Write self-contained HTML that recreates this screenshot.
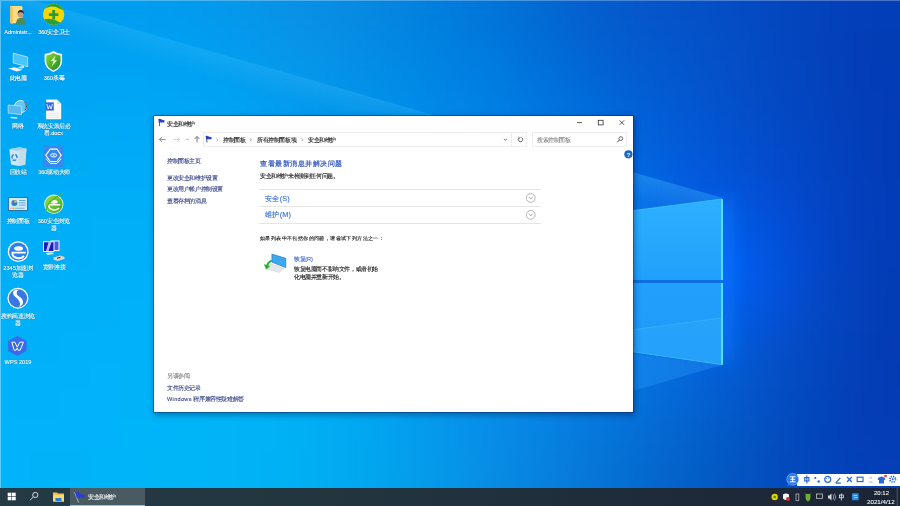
<!DOCTYPE html>
<html><head><meta charset="utf-8">
<style>
*{margin:0;padding:0;box-sizing:border-box}
html,body{width:900px;height:506px;overflow:hidden;font-family:"Liberation Sans",sans-serif;background:#0a70d8}
.a{position:absolute}
.t{position:absolute;white-space:nowrap;line-height:1}
.s{position:absolute;white-space:nowrap;line-height:1;transform:scale(.1);transform-origin:0 0}
.lb{color:#fff;text-align:center;text-shadow:0 0 10px rgba(0,0,0,.5)}
#desk{position:absolute;left:0;top:0;width:900px;height:488px;overflow:hidden}
.lbl{position:absolute;white-space:nowrap;line-height:7.2px;font-size:5.6px;color:#fff;text-align:center;text-shadow:0 0 1px rgba(0,0,0,.6)}
#win{position:absolute;left:153px;top:115px;width:481px;height:298px;background:#fff;background-clip:padding-box;border:1px solid rgba(0,40,100,.4);box-shadow:1px 2px 6px rgba(0,0,40,.35)}
#win .t{font-size:5.6px;color:#1a1a1a}
.nav{color:#2c3a8c !important}
.sep{position:absolute;height:1px;background:#e3e3e3}
#taskbar{position:absolute;left:0;top:488px;width:900px;height:18px;background:linear-gradient(90deg,#243a45 0%,#22353f 40%,#1e2a3a 75%,#1b2434 100%)}
</style></head><body>
<div id="desk">
<svg class="a" style="left:-60px;top:-60px;filter:blur(18px)" width="1020" height="608" viewBox="-60 -60 1020 608"><rect x="-60" y="-60" width="30" height="30" fill="#009def"/><rect x="-30" y="-60" width="30" height="30" fill="#009def"/><rect x="0" y="-60" width="30" height="30" fill="#009def"/><rect x="30" y="-60" width="30" height="30" fill="#009def"/><rect x="60" y="-60" width="30" height="30" fill="#009def"/><rect x="90" y="-60" width="30" height="30" fill="#009def"/><rect x="120" y="-60" width="30" height="30" fill="#009cef"/><rect x="150" y="-60" width="30" height="30" fill="#019bee"/><rect x="180" y="-60" width="30" height="30" fill="#0299ed"/><rect x="210" y="-60" width="30" height="30" fill="#0497eb"/><rect x="240" y="-60" width="30" height="30" fill="#0694e8"/><rect x="270" y="-60" width="30" height="30" fill="#0891e5"/><rect x="300" y="-60" width="30" height="30" fill="#088de3"/><rect x="330" y="-60" width="30" height="30" fill="#078ae1"/><rect x="360" y="-60" width="30" height="30" fill="#0586e0"/><rect x="390" y="-60" width="30" height="30" fill="#0482de"/><rect x="420" y="-60" width="30" height="30" fill="#027ddc"/><rect x="450" y="-60" width="30" height="30" fill="#0178da"/><rect x="480" y="-60" width="30" height="30" fill="#0173d7"/><rect x="510" y="-60" width="30" height="30" fill="#026cd4"/><rect x="540" y="-60" width="30" height="30" fill="#0366d0"/><rect x="570" y="-60" width="30" height="30" fill="#045fcd"/><rect x="600" y="-60" width="30" height="30" fill="#055acb"/><rect x="630" y="-60" width="30" height="30" fill="#0556c8"/><rect x="660" y="-60" width="30" height="30" fill="#0552c7"/><rect x="690" y="-60" width="30" height="30" fill="#044fc5"/><rect x="720" y="-60" width="30" height="30" fill="#044cc2"/><rect x="750" y="-60" width="30" height="30" fill="#0449c0"/><rect x="780" y="-60" width="30" height="30" fill="#0345bd"/><rect x="810" y="-60" width="30" height="30" fill="#0342bb"/><rect x="840" y="-60" width="30" height="30" fill="#0340b9"/><rect x="870" y="-60" width="30" height="30" fill="#033fb8"/><rect x="900" y="-60" width="30" height="30" fill="#033eb7"/><rect x="930" y="-60" width="30" height="30" fill="#033eb7"/><rect x="960" y="-60" width="30" height="30" fill="#033eb7"/><rect x="-60" y="-30" width="30" height="30" fill="#009def"/><rect x="-30" y="-30" width="30" height="30" fill="#009def"/><rect x="0" y="-30" width="30" height="30" fill="#009def"/><rect x="30" y="-30" width="30" height="30" fill="#009def"/><rect x="60" y="-30" width="30" height="30" fill="#009def"/><rect x="90" y="-30" width="30" height="30" fill="#009def"/><rect x="120" y="-30" width="30" height="30" fill="#009cef"/><rect x="150" y="-30" width="30" height="30" fill="#019bee"/><rect x="180" y="-30" width="30" height="30" fill="#0299ed"/><rect x="210" y="-30" width="30" height="30" fill="#0497eb"/><rect x="240" y="-30" width="30" height="30" fill="#0694e8"/><rect x="270" y="-30" width="30" height="30" fill="#0891e5"/><rect x="300" y="-30" width="30" height="30" fill="#088de3"/><rect x="330" y="-30" width="30" height="30" fill="#078ae1"/><rect x="360" y="-30" width="30" height="30" fill="#0586e0"/><rect x="390" y="-30" width="30" height="30" fill="#0482de"/><rect x="420" y="-30" width="30" height="30" fill="#027ddc"/><rect x="450" y="-30" width="30" height="30" fill="#0178da"/><rect x="480" y="-30" width="30" height="30" fill="#0173d7"/><rect x="510" y="-30" width="30" height="30" fill="#026cd4"/><rect x="540" y="-30" width="30" height="30" fill="#0366d0"/><rect x="570" y="-30" width="30" height="30" fill="#045fcd"/><rect x="600" y="-30" width="30" height="30" fill="#055acb"/><rect x="630" y="-30" width="30" height="30" fill="#0556c8"/><rect x="660" y="-30" width="30" height="30" fill="#0552c7"/><rect x="690" y="-30" width="30" height="30" fill="#044fc5"/><rect x="720" y="-30" width="30" height="30" fill="#044cc2"/><rect x="750" y="-30" width="30" height="30" fill="#0449c0"/><rect x="780" y="-30" width="30" height="30" fill="#0345bd"/><rect x="810" y="-30" width="30" height="30" fill="#0342bb"/><rect x="840" y="-30" width="30" height="30" fill="#0340b9"/><rect x="870" y="-30" width="30" height="30" fill="#033fb8"/><rect x="900" y="-30" width="30" height="30" fill="#033eb7"/><rect x="930" y="-30" width="30" height="30" fill="#033eb7"/><rect x="960" y="-30" width="30" height="30" fill="#033eb7"/><rect x="-60" y="0" width="30" height="30" fill="#009ef0"/><rect x="-30" y="0" width="30" height="30" fill="#009ef0"/><rect x="0" y="0" width="30" height="30" fill="#009ef0"/><rect x="30" y="0" width="30" height="30" fill="#009ef0"/><rect x="60" y="0" width="30" height="30" fill="#009ef0"/><rect x="90" y="0" width="30" height="30" fill="#009ef0"/><rect x="120" y="0" width="30" height="30" fill="#009ef0"/><rect x="150" y="0" width="30" height="30" fill="#009def"/><rect x="180" y="0" width="30" height="30" fill="#029bee"/><rect x="210" y="0" width="30" height="30" fill="#0499ec"/><rect x="240" y="0" width="30" height="30" fill="#0696ea"/><rect x="270" y="0" width="30" height="30" fill="#0893e7"/><rect x="300" y="0" width="30" height="30" fill="#088fe4"/><rect x="330" y="0" width="30" height="30" fill="#078be3"/><rect x="360" y="0" width="30" height="30" fill="#0588e1"/><rect x="390" y="0" width="30" height="30" fill="#0384e0"/><rect x="420" y="0" width="30" height="30" fill="#017fde"/><rect x="450" y="0" width="30" height="30" fill="#017adc"/><rect x="480" y="0" width="30" height="30" fill="#0174d9"/><rect x="510" y="0" width="30" height="30" fill="#016ed5"/><rect x="540" y="0" width="30" height="30" fill="#0367d2"/><rect x="570" y="0" width="30" height="30" fill="#0460ce"/><rect x="600" y="0" width="30" height="30" fill="#045bcc"/><rect x="630" y="0" width="30" height="30" fill="#0557ca"/><rect x="660" y="0" width="30" height="30" fill="#0553c8"/><rect x="690" y="0" width="30" height="30" fill="#0450c6"/><rect x="720" y="0" width="30" height="30" fill="#044cc3"/><rect x="750" y="0" width="30" height="30" fill="#0449c1"/><rect x="780" y="0" width="30" height="30" fill="#0345bd"/><rect x="810" y="0" width="30" height="30" fill="#0342ba"/><rect x="840" y="0" width="30" height="30" fill="#033fb8"/><rect x="870" y="0" width="30" height="30" fill="#023eb7"/><rect x="900" y="0" width="30" height="30" fill="#023db7"/><rect x="930" y="0" width="30" height="30" fill="#023db7"/><rect x="960" y="0" width="30" height="30" fill="#023db7"/><rect x="-60" y="30" width="30" height="30" fill="#00a0f1"/><rect x="-30" y="30" width="30" height="30" fill="#00a0f1"/><rect x="0" y="30" width="30" height="30" fill="#00a1f1"/><rect x="30" y="30" width="30" height="30" fill="#00a1f2"/><rect x="60" y="30" width="30" height="30" fill="#00a1f2"/><rect x="90" y="30" width="30" height="30" fill="#00a1f2"/><rect x="120" y="30" width="30" height="30" fill="#00a1f2"/><rect x="150" y="30" width="30" height="30" fill="#00a0f2"/><rect x="180" y="30" width="30" height="30" fill="#009ff1"/><rect x="210" y="30" width="30" height="30" fill="#029cef"/><rect x="240" y="30" width="30" height="30" fill="#0599ec"/><rect x="270" y="30" width="30" height="30" fill="#0796e9"/><rect x="300" y="30" width="30" height="30" fill="#0792e7"/><rect x="330" y="30" width="30" height="30" fill="#068fe5"/><rect x="360" y="30" width="30" height="30" fill="#048be4"/><rect x="390" y="30" width="30" height="30" fill="#0187e3"/><rect x="420" y="30" width="30" height="30" fill="#0082e1"/><rect x="450" y="30" width="30" height="30" fill="#007ddf"/><rect x="480" y="30" width="30" height="30" fill="#0078dc"/><rect x="510" y="30" width="30" height="30" fill="#0071d9"/><rect x="540" y="30" width="30" height="30" fill="#016bd5"/><rect x="570" y="30" width="30" height="30" fill="#0363d2"/><rect x="600" y="30" width="30" height="30" fill="#045dcf"/><rect x="630" y="30" width="30" height="30" fill="#0459cd"/><rect x="660" y="30" width="30" height="30" fill="#0455cb"/><rect x="690" y="30" width="30" height="30" fill="#0451c8"/><rect x="720" y="30" width="30" height="30" fill="#044ec5"/><rect x="750" y="30" width="30" height="30" fill="#034ac2"/><rect x="780" y="30" width="30" height="30" fill="#0345be"/><rect x="810" y="30" width="30" height="30" fill="#0341ba"/><rect x="840" y="30" width="30" height="30" fill="#033eb7"/><rect x="870" y="30" width="30" height="30" fill="#023db6"/><rect x="900" y="30" width="30" height="30" fill="#023cb5"/><rect x="930" y="30" width="30" height="30" fill="#023cb5"/><rect x="960" y="30" width="30" height="30" fill="#023cb5"/><rect x="-60" y="60" width="30" height="30" fill="#00a3f3"/><rect x="-30" y="60" width="30" height="30" fill="#00a3f3"/><rect x="0" y="60" width="30" height="30" fill="#00a3f3"/><rect x="30" y="60" width="30" height="30" fill="#00a3f3"/><rect x="60" y="60" width="30" height="30" fill="#00a4f3"/><rect x="90" y="60" width="30" height="30" fill="#00a4f4"/><rect x="120" y="60" width="30" height="30" fill="#00a4f4"/><rect x="150" y="60" width="30" height="30" fill="#00a3f4"/><rect x="180" y="60" width="30" height="30" fill="#00a2f4"/><rect x="210" y="60" width="30" height="30" fill="#01a0f2"/><rect x="240" y="60" width="30" height="30" fill="#039def"/><rect x="270" y="60" width="30" height="30" fill="#0599ec"/><rect x="300" y="60" width="30" height="30" fill="#0596ea"/><rect x="330" y="60" width="30" height="30" fill="#0492e8"/><rect x="360" y="60" width="30" height="30" fill="#028ee7"/><rect x="390" y="60" width="30" height="30" fill="#008ae6"/><rect x="420" y="60" width="30" height="30" fill="#0085e4"/><rect x="450" y="60" width="30" height="30" fill="#0081e2"/><rect x="480" y="60" width="30" height="30" fill="#007bdf"/><rect x="510" y="60" width="30" height="30" fill="#0075dd"/><rect x="540" y="60" width="30" height="30" fill="#006fd9"/><rect x="570" y="60" width="30" height="30" fill="#0168d6"/><rect x="600" y="60" width="30" height="30" fill="#0261d3"/><rect x="630" y="60" width="30" height="30" fill="#035cd1"/><rect x="660" y="60" width="30" height="30" fill="#0357ce"/><rect x="690" y="60" width="30" height="30" fill="#0453cb"/><rect x="720" y="60" width="30" height="30" fill="#044ec7"/><rect x="750" y="60" width="30" height="30" fill="#034ac3"/><rect x="780" y="60" width="30" height="30" fill="#0346bf"/><rect x="810" y="60" width="30" height="30" fill="#0342bb"/><rect x="840" y="60" width="30" height="30" fill="#033eb8"/><rect x="870" y="60" width="30" height="30" fill="#023cb6"/><rect x="900" y="60" width="30" height="30" fill="#023bb5"/><rect x="930" y="60" width="30" height="30" fill="#023bb5"/><rect x="960" y="60" width="30" height="30" fill="#023bb5"/><rect x="-60" y="90" width="30" height="30" fill="#00a5f4"/><rect x="-30" y="90" width="30" height="30" fill="#00a5f4"/><rect x="0" y="90" width="30" height="30" fill="#00a6f4"/><rect x="30" y="90" width="30" height="30" fill="#00a6f4"/><rect x="60" y="90" width="30" height="30" fill="#00a6f5"/><rect x="90" y="90" width="30" height="30" fill="#00a7f5"/><rect x="120" y="90" width="30" height="30" fill="#00a7f6"/><rect x="150" y="90" width="30" height="30" fill="#00a6f6"/><rect x="180" y="90" width="30" height="30" fill="#00a5f5"/><rect x="210" y="90" width="30" height="30" fill="#00a3f4"/><rect x="240" y="90" width="30" height="30" fill="#02a0f2"/><rect x="270" y="90" width="30" height="30" fill="#039cef"/><rect x="300" y="90" width="30" height="30" fill="#0399ed"/><rect x="330" y="90" width="30" height="30" fill="#0295eb"/><rect x="360" y="90" width="30" height="30" fill="#0191ea"/><rect x="390" y="90" width="30" height="30" fill="#008de8"/><rect x="420" y="90" width="30" height="30" fill="#0088e7"/><rect x="450" y="90" width="30" height="30" fill="#0084e5"/><rect x="480" y="90" width="30" height="30" fill="#007ee3"/><rect x="510" y="90" width="30" height="30" fill="#0079e1"/><rect x="540" y="90" width="30" height="30" fill="#0073de"/><rect x="570" y="90" width="30" height="30" fill="#006cdb"/><rect x="600" y="90" width="30" height="30" fill="#0165d8"/><rect x="630" y="90" width="30" height="30" fill="#025fd5"/><rect x="660" y="90" width="30" height="30" fill="#035ad2"/><rect x="690" y="90" width="30" height="30" fill="#0354cf"/><rect x="720" y="90" width="30" height="30" fill="#0350ca"/><rect x="750" y="90" width="30" height="30" fill="#034bc5"/><rect x="780" y="90" width="30" height="30" fill="#0346c1"/><rect x="810" y="90" width="30" height="30" fill="#0342bd"/><rect x="840" y="90" width="30" height="30" fill="#033fb9"/><rect x="870" y="90" width="30" height="30" fill="#033cb6"/><rect x="900" y="90" width="30" height="30" fill="#033bb5"/><rect x="930" y="90" width="30" height="30" fill="#033bb5"/><rect x="960" y="90" width="30" height="30" fill="#033bb5"/><rect x="-60" y="120" width="30" height="30" fill="#00a7f5"/><rect x="-30" y="120" width="30" height="30" fill="#00a7f5"/><rect x="0" y="120" width="30" height="30" fill="#00a8f5"/><rect x="30" y="120" width="30" height="30" fill="#00a8f5"/><rect x="60" y="120" width="30" height="30" fill="#00a9f6"/><rect x="90" y="120" width="30" height="30" fill="#00a9f6"/><rect x="120" y="120" width="30" height="30" fill="#00a9f7"/><rect x="150" y="120" width="30" height="30" fill="#00a9f7"/><rect x="180" y="120" width="30" height="30" fill="#00a7f6"/><rect x="210" y="120" width="30" height="30" fill="#00a5f5"/><rect x="240" y="120" width="30" height="30" fill="#01a3f3"/><rect x="270" y="120" width="30" height="30" fill="#029ff2"/><rect x="300" y="120" width="30" height="30" fill="#029cf0"/><rect x="330" y="120" width="30" height="30" fill="#0198ee"/><rect x="360" y="120" width="30" height="30" fill="#0094ed"/><rect x="390" y="120" width="30" height="30" fill="#0090eb"/><rect x="420" y="120" width="30" height="30" fill="#008bea"/><rect x="450" y="120" width="30" height="30" fill="#0086e8"/><rect x="480" y="120" width="30" height="30" fill="#0081e6"/><rect x="510" y="120" width="30" height="30" fill="#007ce4"/><rect x="540" y="120" width="30" height="30" fill="#0076e2"/><rect x="570" y="120" width="30" height="30" fill="#006fe0"/><rect x="600" y="120" width="30" height="30" fill="#0169dd"/><rect x="630" y="120" width="30" height="30" fill="#0262da"/><rect x="660" y="120" width="30" height="30" fill="#035cd7"/><rect x="690" y="120" width="30" height="30" fill="#0356d3"/><rect x="720" y="120" width="30" height="30" fill="#0351ce"/><rect x="750" y="120" width="30" height="30" fill="#034cc9"/><rect x="780" y="120" width="30" height="30" fill="#0347c4"/><rect x="810" y="120" width="30" height="30" fill="#0343bf"/><rect x="840" y="120" width="30" height="30" fill="#033fba"/><rect x="870" y="120" width="30" height="30" fill="#033cb7"/><rect x="900" y="120" width="30" height="30" fill="#033ab5"/><rect x="930" y="120" width="30" height="30" fill="#033ab5"/><rect x="960" y="120" width="30" height="30" fill="#033ab5"/><rect x="-60" y="150" width="30" height="30" fill="#00a9f6"/><rect x="-30" y="150" width="30" height="30" fill="#00a9f6"/><rect x="0" y="150" width="30" height="30" fill="#00aaf6"/><rect x="30" y="150" width="30" height="30" fill="#00aaf6"/><rect x="60" y="150" width="30" height="30" fill="#00abf6"/><rect x="90" y="150" width="30" height="30" fill="#00abf7"/><rect x="120" y="150" width="30" height="30" fill="#00abf7"/><rect x="150" y="150" width="30" height="30" fill="#00abf7"/><rect x="180" y="150" width="30" height="30" fill="#00aaf7"/><rect x="210" y="150" width="30" height="30" fill="#00a8f6"/><rect x="240" y="150" width="30" height="30" fill="#00a5f5"/><rect x="270" y="150" width="30" height="30" fill="#01a2f3"/><rect x="300" y="150" width="30" height="30" fill="#019ff2"/><rect x="330" y="150" width="30" height="30" fill="#009bf0"/><rect x="360" y="150" width="30" height="30" fill="#0097ef"/><rect x="390" y="150" width="30" height="30" fill="#0092ee"/><rect x="420" y="150" width="30" height="30" fill="#008eec"/><rect x="450" y="150" width="30" height="30" fill="#0089eb"/><rect x="480" y="150" width="30" height="30" fill="#0084e9"/><rect x="510" y="150" width="30" height="30" fill="#007fe8"/><rect x="540" y="150" width="30" height="30" fill="#0079e6"/><rect x="570" y="150" width="30" height="30" fill="#0072e4"/><rect x="600" y="150" width="30" height="30" fill="#016be2"/><rect x="630" y="150" width="30" height="30" fill="#0265df"/><rect x="660" y="150" width="30" height="30" fill="#025edc"/><rect x="690" y="150" width="30" height="30" fill="#0358d8"/><rect x="720" y="150" width="30" height="30" fill="#0352d3"/><rect x="750" y="150" width="30" height="30" fill="#034dce"/><rect x="780" y="150" width="30" height="30" fill="#0348c7"/><rect x="810" y="150" width="30" height="30" fill="#0343c1"/><rect x="840" y="150" width="30" height="30" fill="#033fbc"/><rect x="870" y="150" width="30" height="30" fill="#033cb7"/><rect x="900" y="150" width="30" height="30" fill="#033ab5"/><rect x="930" y="150" width="30" height="30" fill="#033ab5"/><rect x="960" y="150" width="30" height="30" fill="#033ab5"/><rect x="-60" y="180" width="30" height="30" fill="#00abf6"/><rect x="-30" y="180" width="30" height="30" fill="#00abf6"/><rect x="0" y="180" width="30" height="30" fill="#00abf7"/><rect x="30" y="180" width="30" height="30" fill="#00acf7"/><rect x="60" y="180" width="30" height="30" fill="#00adf7"/><rect x="90" y="180" width="30" height="30" fill="#00adf7"/><rect x="120" y="180" width="30" height="30" fill="#00adf7"/><rect x="150" y="180" width="30" height="30" fill="#00adf8"/><rect x="180" y="180" width="30" height="30" fill="#00abf7"/><rect x="210" y="180" width="30" height="30" fill="#00aaf7"/><rect x="240" y="180" width="30" height="30" fill="#00a7f6"/><rect x="270" y="180" width="30" height="30" fill="#00a5f5"/><rect x="300" y="180" width="30" height="30" fill="#00a1f3"/><rect x="330" y="180" width="30" height="30" fill="#009df2"/><rect x="360" y="180" width="30" height="30" fill="#0099f1"/><rect x="390" y="180" width="30" height="30" fill="#0095f0"/><rect x="420" y="180" width="30" height="30" fill="#0090ee"/><rect x="450" y="180" width="30" height="30" fill="#008ced"/><rect x="480" y="180" width="30" height="30" fill="#0086ec"/><rect x="510" y="180" width="30" height="30" fill="#0081ea"/><rect x="540" y="180" width="30" height="30" fill="#007be9"/><rect x="570" y="180" width="30" height="30" fill="#0175e7"/><rect x="600" y="180" width="30" height="30" fill="#016ee6"/><rect x="630" y="180" width="30" height="30" fill="#0267e4"/><rect x="660" y="180" width="30" height="30" fill="#0360e1"/><rect x="690" y="180" width="30" height="30" fill="#035ade"/><rect x="720" y="180" width="30" height="30" fill="#0354d9"/><rect x="750" y="180" width="30" height="30" fill="#034ed2"/><rect x="780" y="180" width="30" height="30" fill="#0349cb"/><rect x="810" y="180" width="30" height="30" fill="#0344c4"/><rect x="840" y="180" width="30" height="30" fill="#0340bd"/><rect x="870" y="180" width="30" height="30" fill="#033cb8"/><rect x="900" y="180" width="30" height="30" fill="#033bb5"/><rect x="930" y="180" width="30" height="30" fill="#033bb5"/><rect x="960" y="180" width="30" height="30" fill="#033bb5"/><rect x="-60" y="210" width="30" height="30" fill="#00acf7"/><rect x="-30" y="210" width="30" height="30" fill="#00acf7"/><rect x="0" y="210" width="30" height="30" fill="#00adf7"/><rect x="30" y="210" width="30" height="30" fill="#00adf7"/><rect x="60" y="210" width="30" height="30" fill="#00aef8"/><rect x="90" y="210" width="30" height="30" fill="#00aff8"/><rect x="120" y="210" width="30" height="30" fill="#00aff8"/><rect x="150" y="210" width="30" height="30" fill="#00aef8"/><rect x="180" y="210" width="30" height="30" fill="#00adf8"/><rect x="210" y="210" width="30" height="30" fill="#00acf7"/><rect x="240" y="210" width="30" height="30" fill="#00a9f7"/><rect x="270" y="210" width="30" height="30" fill="#00a7f6"/><rect x="300" y="210" width="30" height="30" fill="#00a4f5"/><rect x="330" y="210" width="30" height="30" fill="#00a0f3"/><rect x="360" y="210" width="30" height="30" fill="#009cf2"/><rect x="390" y="210" width="30" height="30" fill="#0097f1"/><rect x="420" y="210" width="30" height="30" fill="#0093f0"/><rect x="450" y="210" width="30" height="30" fill="#008eef"/><rect x="480" y="210" width="30" height="30" fill="#0089ee"/><rect x="510" y="210" width="30" height="30" fill="#0083ec"/><rect x="540" y="210" width="30" height="30" fill="#017deb"/><rect x="570" y="210" width="30" height="30" fill="#0177ea"/><rect x="600" y="210" width="30" height="30" fill="#0270e9"/><rect x="630" y="210" width="30" height="30" fill="#0269e7"/><rect x="660" y="210" width="30" height="30" fill="#0362e5"/><rect x="690" y="210" width="30" height="30" fill="#035be2"/><rect x="720" y="210" width="30" height="30" fill="#0355de"/><rect x="750" y="210" width="30" height="30" fill="#034fd7"/><rect x="780" y="210" width="30" height="30" fill="#0349ce"/><rect x="810" y="210" width="30" height="30" fill="#0345c5"/><rect x="840" y="210" width="30" height="30" fill="#0340be"/><rect x="870" y="210" width="30" height="30" fill="#033cb8"/><rect x="900" y="210" width="30" height="30" fill="#033bb5"/><rect x="930" y="210" width="30" height="30" fill="#033bb5"/><rect x="960" y="210" width="30" height="30" fill="#033bb5"/><rect x="-60" y="240" width="30" height="30" fill="#00aef8"/><rect x="-30" y="240" width="30" height="30" fill="#00aef8"/><rect x="0" y="240" width="30" height="30" fill="#00aef8"/><rect x="30" y="240" width="30" height="30" fill="#00aef8"/><rect x="60" y="240" width="30" height="30" fill="#00aff8"/><rect x="90" y="240" width="30" height="30" fill="#00b0f8"/><rect x="120" y="240" width="30" height="30" fill="#00b0f8"/><rect x="150" y="240" width="30" height="30" fill="#00b0f8"/><rect x="180" y="240" width="30" height="30" fill="#00aff8"/><rect x="210" y="240" width="30" height="30" fill="#00adf8"/><rect x="240" y="240" width="30" height="30" fill="#00abf7"/><rect x="270" y="240" width="30" height="30" fill="#00a9f6"/><rect x="300" y="240" width="30" height="30" fill="#00a6f5"/><rect x="330" y="240" width="30" height="30" fill="#00a2f4"/><rect x="360" y="240" width="30" height="30" fill="#009ef3"/><rect x="390" y="240" width="30" height="30" fill="#009af2"/><rect x="420" y="240" width="30" height="30" fill="#0095f1"/><rect x="450" y="240" width="30" height="30" fill="#0190f0"/><rect x="480" y="240" width="30" height="30" fill="#018aef"/><rect x="510" y="240" width="30" height="30" fill="#0185ee"/><rect x="540" y="240" width="30" height="30" fill="#027fed"/><rect x="570" y="240" width="30" height="30" fill="#0279ec"/><rect x="600" y="240" width="30" height="30" fill="#0372eb"/><rect x="630" y="240" width="30" height="30" fill="#036be9"/><rect x="660" y="240" width="30" height="30" fill="#0364e8"/><rect x="690" y="240" width="30" height="30" fill="#035de5"/><rect x="720" y="240" width="30" height="30" fill="#0356e1"/><rect x="750" y="240" width="30" height="30" fill="#0350d9"/><rect x="780" y="240" width="30" height="30" fill="#034acf"/><rect x="810" y="240" width="30" height="30" fill="#0345c5"/><rect x="840" y="240" width="30" height="30" fill="#0341bd"/><rect x="870" y="240" width="30" height="30" fill="#033db7"/><rect x="900" y="240" width="30" height="30" fill="#033bb5"/><rect x="930" y="240" width="30" height="30" fill="#033bb5"/><rect x="960" y="240" width="30" height="30" fill="#033bb5"/><rect x="-60" y="270" width="30" height="30" fill="#00aff8"/><rect x="-30" y="270" width="30" height="30" fill="#00aff8"/><rect x="0" y="270" width="30" height="30" fill="#00aff8"/><rect x="30" y="270" width="30" height="30" fill="#00b0f8"/><rect x="60" y="270" width="30" height="30" fill="#00b0f9"/><rect x="90" y="270" width="30" height="30" fill="#00b1f9"/><rect x="120" y="270" width="30" height="30" fill="#00b1f9"/><rect x="150" y="270" width="30" height="30" fill="#00b1f9"/><rect x="180" y="270" width="30" height="30" fill="#00b0f9"/><rect x="210" y="270" width="30" height="30" fill="#00aff8"/><rect x="240" y="270" width="30" height="30" fill="#00adf8"/><rect x="270" y="270" width="30" height="30" fill="#00abf7"/><rect x="300" y="270" width="30" height="30" fill="#00a8f6"/><rect x="330" y="270" width="30" height="30" fill="#00a4f5"/><rect x="360" y="270" width="30" height="30" fill="#01a0f4"/><rect x="390" y="270" width="30" height="30" fill="#019bf3"/><rect x="420" y="270" width="30" height="30" fill="#0196f1"/><rect x="450" y="270" width="30" height="30" fill="#0291f0"/><rect x="480" y="270" width="30" height="30" fill="#028cef"/><rect x="510" y="270" width="30" height="30" fill="#0286ee"/><rect x="540" y="270" width="30" height="30" fill="#0380ed"/><rect x="570" y="270" width="30" height="30" fill="#037aec"/><rect x="600" y="270" width="30" height="30" fill="#0374eb"/><rect x="630" y="270" width="30" height="30" fill="#046de9"/><rect x="660" y="270" width="30" height="30" fill="#0466e8"/><rect x="690" y="270" width="30" height="30" fill="#045fe5"/><rect x="720" y="270" width="30" height="30" fill="#0457e1"/><rect x="750" y="270" width="30" height="30" fill="#0451d9"/><rect x="780" y="270" width="30" height="30" fill="#044bce"/><rect x="810" y="270" width="30" height="30" fill="#0445c4"/><rect x="840" y="270" width="30" height="30" fill="#0441bc"/><rect x="870" y="270" width="30" height="30" fill="#033db6"/><rect x="900" y="270" width="30" height="30" fill="#033bb4"/><rect x="930" y="270" width="30" height="30" fill="#033bb4"/><rect x="960" y="270" width="30" height="30" fill="#033bb4"/><rect x="-60" y="300" width="30" height="30" fill="#00b0f9"/><rect x="-30" y="300" width="30" height="30" fill="#00b0f9"/><rect x="0" y="300" width="30" height="30" fill="#00b0f9"/><rect x="30" y="300" width="30" height="30" fill="#00b0f9"/><rect x="60" y="300" width="30" height="30" fill="#00b1f9"/><rect x="90" y="300" width="30" height="30" fill="#00b1f9"/><rect x="120" y="300" width="30" height="30" fill="#00b2f9"/><rect x="150" y="300" width="30" height="30" fill="#00b2f9"/><rect x="180" y="300" width="30" height="30" fill="#00b1f9"/><rect x="210" y="300" width="30" height="30" fill="#00b0f8"/><rect x="240" y="300" width="30" height="30" fill="#00aff8"/><rect x="270" y="300" width="30" height="30" fill="#00acf7"/><rect x="300" y="300" width="30" height="30" fill="#00a9f6"/><rect x="330" y="300" width="30" height="30" fill="#00a6f5"/><rect x="360" y="300" width="30" height="30" fill="#01a1f4"/><rect x="390" y="300" width="30" height="30" fill="#029df3"/><rect x="420" y="300" width="30" height="30" fill="#0298f1"/><rect x="450" y="300" width="30" height="30" fill="#0392f0"/><rect x="480" y="300" width="30" height="30" fill="#038def"/><rect x="510" y="300" width="30" height="30" fill="#0487ed"/><rect x="540" y="300" width="30" height="30" fill="#0481ec"/><rect x="570" y="300" width="30" height="30" fill="#047bea"/><rect x="600" y="300" width="30" height="30" fill="#0475e9"/><rect x="630" y="300" width="30" height="30" fill="#046fe7"/><rect x="660" y="300" width="30" height="30" fill="#0468e5"/><rect x="690" y="300" width="30" height="30" fill="#0461e1"/><rect x="720" y="300" width="30" height="30" fill="#0459dc"/><rect x="750" y="300" width="30" height="30" fill="#0452d4"/><rect x="780" y="300" width="30" height="30" fill="#044bca"/><rect x="810" y="300" width="30" height="30" fill="#0446c1"/><rect x="840" y="300" width="30" height="30" fill="#0441ba"/><rect x="870" y="300" width="30" height="30" fill="#033db5"/><rect x="900" y="300" width="30" height="30" fill="#033bb3"/><rect x="930" y="300" width="30" height="30" fill="#033bb3"/><rect x="960" y="300" width="30" height="30" fill="#033bb3"/><rect x="-60" y="330" width="30" height="30" fill="#00b1f9"/><rect x="-30" y="330" width="30" height="30" fill="#00b1f9"/><rect x="0" y="330" width="30" height="30" fill="#00b1f9"/><rect x="30" y="330" width="30" height="30" fill="#00b1f9"/><rect x="60" y="330" width="30" height="30" fill="#00b2f9"/><rect x="90" y="330" width="30" height="30" fill="#00b2f9"/><rect x="120" y="330" width="30" height="30" fill="#00b2f9"/><rect x="150" y="330" width="30" height="30" fill="#00b3f9"/><rect x="180" y="330" width="30" height="30" fill="#00b2f9"/><rect x="210" y="330" width="30" height="30" fill="#00b1f8"/><rect x="240" y="330" width="30" height="30" fill="#00b0f8"/><rect x="270" y="330" width="30" height="30" fill="#00aef7"/><rect x="300" y="330" width="30" height="30" fill="#00abf6"/><rect x="330" y="330" width="30" height="30" fill="#01a7f5"/><rect x="360" y="330" width="30" height="30" fill="#01a3f3"/><rect x="390" y="330" width="30" height="30" fill="#029ef2"/><rect x="420" y="330" width="30" height="30" fill="#0399f1"/><rect x="450" y="330" width="30" height="30" fill="#0493ef"/><rect x="480" y="330" width="30" height="30" fill="#048ded"/><rect x="510" y="330" width="30" height="30" fill="#0588ec"/><rect x="540" y="330" width="30" height="30" fill="#0582ea"/><rect x="570" y="330" width="30" height="30" fill="#057ce8"/><rect x="600" y="330" width="30" height="30" fill="#0576e6"/><rect x="630" y="330" width="30" height="30" fill="#0570e3"/><rect x="660" y="330" width="30" height="30" fill="#046ae0"/><rect x="690" y="330" width="30" height="30" fill="#0462dc"/><rect x="720" y="330" width="30" height="30" fill="#045ad6"/><rect x="750" y="330" width="30" height="30" fill="#0452ce"/><rect x="780" y="330" width="30" height="30" fill="#044cc5"/><rect x="810" y="330" width="30" height="30" fill="#0345be"/><rect x="840" y="330" width="30" height="30" fill="#0340b9"/><rect x="870" y="330" width="30" height="30" fill="#033cb5"/><rect x="900" y="330" width="30" height="30" fill="#033bb3"/><rect x="930" y="330" width="30" height="30" fill="#033bb3"/><rect x="960" y="330" width="30" height="30" fill="#033bb3"/><rect x="-60" y="360" width="30" height="30" fill="#00b1f9"/><rect x="-30" y="360" width="30" height="30" fill="#00b1f9"/><rect x="0" y="360" width="30" height="30" fill="#00b2f9"/><rect x="30" y="360" width="30" height="30" fill="#00b2f9"/><rect x="60" y="360" width="30" height="30" fill="#00b2fa"/><rect x="90" y="360" width="30" height="30" fill="#00b3fa"/><rect x="120" y="360" width="30" height="30" fill="#00b3f9"/><rect x="150" y="360" width="30" height="30" fill="#00b3f9"/><rect x="180" y="360" width="30" height="30" fill="#00b3f9"/><rect x="210" y="360" width="30" height="30" fill="#00b2f8"/><rect x="240" y="360" width="30" height="30" fill="#00b1f8"/><rect x="270" y="360" width="30" height="30" fill="#00aff7"/><rect x="300" y="360" width="30" height="30" fill="#00acf6"/><rect x="330" y="360" width="30" height="30" fill="#01a8f4"/><rect x="360" y="360" width="30" height="30" fill="#02a4f3"/><rect x="390" y="360" width="30" height="30" fill="#039ff1"/><rect x="420" y="360" width="30" height="30" fill="#0499ef"/><rect x="450" y="360" width="30" height="30" fill="#0593ee"/><rect x="480" y="360" width="30" height="30" fill="#068eec"/><rect x="510" y="360" width="30" height="30" fill="#0688e9"/><rect x="540" y="360" width="30" height="30" fill="#0682e7"/><rect x="570" y="360" width="30" height="30" fill="#067ce4"/><rect x="600" y="360" width="30" height="30" fill="#0576e2"/><rect x="630" y="360" width="30" height="30" fill="#0570df"/><rect x="660" y="360" width="30" height="30" fill="#056adb"/><rect x="690" y="360" width="30" height="30" fill="#0462d6"/><rect x="720" y="360" width="30" height="30" fill="#045ad0"/><rect x="750" y="360" width="30" height="30" fill="#0452c8"/><rect x="780" y="360" width="30" height="30" fill="#034bc1"/><rect x="810" y="360" width="30" height="30" fill="#0345bc"/><rect x="840" y="360" width="30" height="30" fill="#0440b8"/><rect x="870" y="360" width="30" height="30" fill="#043cb4"/><rect x="900" y="360" width="30" height="30" fill="#043ab3"/><rect x="930" y="360" width="30" height="30" fill="#043ab3"/><rect x="960" y="360" width="30" height="30" fill="#043ab3"/><rect x="-60" y="390" width="30" height="30" fill="#00b2fa"/><rect x="-30" y="390" width="30" height="30" fill="#00b2fa"/><rect x="0" y="390" width="30" height="30" fill="#00b2fa"/><rect x="30" y="390" width="30" height="30" fill="#00b2fa"/><rect x="60" y="390" width="30" height="30" fill="#00b3fa"/><rect x="90" y="390" width="30" height="30" fill="#00b3fa"/><rect x="120" y="390" width="30" height="30" fill="#00b3f9"/><rect x="150" y="390" width="30" height="30" fill="#00b4f9"/><rect x="180" y="390" width="30" height="30" fill="#00b4f9"/><rect x="210" y="390" width="30" height="30" fill="#00b3f8"/><rect x="240" y="390" width="30" height="30" fill="#00b2f7"/><rect x="270" y="390" width="30" height="30" fill="#00b0f6"/><rect x="300" y="390" width="30" height="30" fill="#00adf5"/><rect x="330" y="390" width="30" height="30" fill="#01a9f3"/><rect x="360" y="390" width="30" height="30" fill="#02a5f2"/><rect x="390" y="390" width="30" height="30" fill="#039ff0"/><rect x="420" y="390" width="30" height="30" fill="#059aee"/><rect x="450" y="390" width="30" height="30" fill="#0693ec"/><rect x="480" y="390" width="30" height="30" fill="#078de9"/><rect x="510" y="390" width="30" height="30" fill="#0787e7"/><rect x="540" y="390" width="30" height="30" fill="#0781e4"/><rect x="570" y="390" width="30" height="30" fill="#067be1"/><rect x="600" y="390" width="30" height="30" fill="#0575dd"/><rect x="630" y="390" width="30" height="30" fill="#056fd9"/><rect x="660" y="390" width="30" height="30" fill="#0468d5"/><rect x="690" y="390" width="30" height="30" fill="#0461d0"/><rect x="720" y="390" width="30" height="30" fill="#0459ca"/><rect x="750" y="390" width="30" height="30" fill="#0351c4"/><rect x="780" y="390" width="30" height="30" fill="#034abf"/><rect x="810" y="390" width="30" height="30" fill="#0344ba"/><rect x="840" y="390" width="30" height="30" fill="#043fb7"/><rect x="870" y="390" width="30" height="30" fill="#043cb5"/><rect x="900" y="390" width="30" height="30" fill="#043bb4"/><rect x="930" y="390" width="30" height="30" fill="#043bb4"/><rect x="960" y="390" width="30" height="30" fill="#043bb4"/><rect x="-60" y="420" width="30" height="30" fill="#00b3fa"/><rect x="-30" y="420" width="30" height="30" fill="#00b3fa"/><rect x="0" y="420" width="30" height="30" fill="#00b3fa"/><rect x="30" y="420" width="30" height="30" fill="#00b3fa"/><rect x="60" y="420" width="30" height="30" fill="#00b3fa"/><rect x="90" y="420" width="30" height="30" fill="#00b3fa"/><rect x="120" y="420" width="30" height="30" fill="#00b4f9"/><rect x="150" y="420" width="30" height="30" fill="#00b4f9"/><rect x="180" y="420" width="30" height="30" fill="#00b4f8"/><rect x="210" y="420" width="30" height="30" fill="#00b4f7"/><rect x="240" y="420" width="30" height="30" fill="#00b3f7"/><rect x="270" y="420" width="30" height="30" fill="#00b1f5"/><rect x="300" y="420" width="30" height="30" fill="#00aef4"/><rect x="330" y="420" width="30" height="30" fill="#01aaf2"/><rect x="360" y="420" width="30" height="30" fill="#02a5f1"/><rect x="390" y="420" width="30" height="30" fill="#049fee"/><rect x="420" y="420" width="30" height="30" fill="#0599ec"/><rect x="450" y="420" width="30" height="30" fill="#0693ea"/><rect x="480" y="420" width="30" height="30" fill="#078de7"/><rect x="510" y="420" width="30" height="30" fill="#0786e4"/><rect x="540" y="420" width="30" height="30" fill="#0780e0"/><rect x="570" y="420" width="30" height="30" fill="#067add"/><rect x="600" y="420" width="30" height="30" fill="#0573d8"/><rect x="630" y="420" width="30" height="30" fill="#056cd4"/><rect x="660" y="420" width="30" height="30" fill="#0465cf"/><rect x="690" y="420" width="30" height="30" fill="#035eca"/><rect x="720" y="420" width="30" height="30" fill="#0357c6"/><rect x="750" y="420" width="30" height="30" fill="#0350c1"/><rect x="780" y="420" width="30" height="30" fill="#0349bd"/><rect x="810" y="420" width="30" height="30" fill="#0343ba"/><rect x="840" y="420" width="30" height="30" fill="#043fb7"/><rect x="870" y="420" width="30" height="30" fill="#043db5"/><rect x="900" y="420" width="30" height="30" fill="#043cb5"/><rect x="930" y="420" width="30" height="30" fill="#043cb5"/><rect x="960" y="420" width="30" height="30" fill="#043cb5"/><rect x="-60" y="450" width="30" height="30" fill="#00b3fa"/><rect x="-30" y="450" width="30" height="30" fill="#00b3fa"/><rect x="0" y="450" width="30" height="30" fill="#00b3fa"/><rect x="30" y="450" width="30" height="30" fill="#00b3f9"/><rect x="60" y="450" width="30" height="30" fill="#00b3f9"/><rect x="90" y="450" width="30" height="30" fill="#00b4f9"/><rect x="120" y="450" width="30" height="30" fill="#00b4f9"/><rect x="150" y="450" width="30" height="30" fill="#00b4f8"/><rect x="180" y="450" width="30" height="30" fill="#00b4f8"/><rect x="210" y="450" width="30" height="30" fill="#00b4f7"/><rect x="240" y="450" width="30" height="30" fill="#00b3f6"/><rect x="270" y="450" width="30" height="30" fill="#00b1f4"/><rect x="300" y="450" width="30" height="30" fill="#00aef3"/><rect x="330" y="450" width="30" height="30" fill="#01aaf1"/><rect x="360" y="450" width="30" height="30" fill="#02a5ef"/><rect x="390" y="450" width="30" height="30" fill="#049fed"/><rect x="420" y="450" width="30" height="30" fill="#0599ea"/><rect x="450" y="450" width="30" height="30" fill="#0793e7"/><rect x="480" y="450" width="30" height="30" fill="#078ce4"/><rect x="510" y="450" width="30" height="30" fill="#0786e1"/><rect x="540" y="450" width="30" height="30" fill="#077fdd"/><rect x="570" y="450" width="30" height="30" fill="#0678d9"/><rect x="600" y="450" width="30" height="30" fill="#0571d5"/><rect x="630" y="450" width="30" height="30" fill="#046ad0"/><rect x="660" y="450" width="30" height="30" fill="#0463cb"/><rect x="690" y="450" width="30" height="30" fill="#035cc6"/><rect x="720" y="450" width="30" height="30" fill="#0356c3"/><rect x="750" y="450" width="30" height="30" fill="#034fbf"/><rect x="780" y="450" width="30" height="30" fill="#0349bc"/><rect x="810" y="450" width="30" height="30" fill="#0344ba"/><rect x="840" y="450" width="30" height="30" fill="#0340b8"/><rect x="870" y="450" width="30" height="30" fill="#043fb7"/><rect x="900" y="450" width="30" height="30" fill="#043eb6"/><rect x="930" y="450" width="30" height="30" fill="#043eb6"/><rect x="960" y="450" width="30" height="30" fill="#043eb6"/><rect x="-60" y="480" width="30" height="30" fill="#00b4fa"/><rect x="-30" y="480" width="30" height="30" fill="#00b4fa"/><rect x="0" y="480" width="30" height="30" fill="#00b4f9"/><rect x="30" y="480" width="30" height="30" fill="#00b4f9"/><rect x="60" y="480" width="30" height="30" fill="#00b4f9"/><rect x="90" y="480" width="30" height="30" fill="#00b4f9"/><rect x="120" y="480" width="30" height="30" fill="#00b4f8"/><rect x="150" y="480" width="30" height="30" fill="#00b4f8"/><rect x="180" y="480" width="30" height="30" fill="#00b4f7"/><rect x="210" y="480" width="30" height="30" fill="#00b4f6"/><rect x="240" y="480" width="30" height="30" fill="#00b3f5"/><rect x="270" y="480" width="30" height="30" fill="#00b1f4"/><rect x="300" y="480" width="30" height="30" fill="#00aef2"/><rect x="330" y="480" width="30" height="30" fill="#01aaf0"/><rect x="360" y="480" width="30" height="30" fill="#02a5ee"/><rect x="390" y="480" width="30" height="30" fill="#049feb"/><rect x="420" y="480" width="30" height="30" fill="#0599e9"/><rect x="450" y="480" width="30" height="30" fill="#0692e6"/><rect x="480" y="480" width="30" height="30" fill="#078ce2"/><rect x="510" y="480" width="30" height="30" fill="#0785df"/><rect x="540" y="480" width="30" height="30" fill="#077edb"/><rect x="570" y="480" width="30" height="30" fill="#0678d7"/><rect x="600" y="480" width="30" height="30" fill="#0571d2"/><rect x="630" y="480" width="30" height="30" fill="#0469cd"/><rect x="660" y="480" width="30" height="30" fill="#0462c9"/><rect x="690" y="480" width="30" height="30" fill="#035cc5"/><rect x="720" y="480" width="30" height="30" fill="#0355c1"/><rect x="750" y="480" width="30" height="30" fill="#034fbe"/><rect x="780" y="480" width="30" height="30" fill="#034abc"/><rect x="810" y="480" width="30" height="30" fill="#0345ba"/><rect x="840" y="480" width="30" height="30" fill="#0342b9"/><rect x="870" y="480" width="30" height="30" fill="#0340b8"/><rect x="900" y="480" width="30" height="30" fill="#033fb7"/><rect x="930" y="480" width="30" height="30" fill="#033fb7"/><rect x="960" y="480" width="30" height="30" fill="#033fb7"/><rect x="-60" y="510" width="30" height="30" fill="#00b4fa"/><rect x="-30" y="510" width="30" height="30" fill="#00b4fa"/><rect x="0" y="510" width="30" height="30" fill="#00b4f9"/><rect x="30" y="510" width="30" height="30" fill="#00b4f9"/><rect x="60" y="510" width="30" height="30" fill="#00b4f9"/><rect x="90" y="510" width="30" height="30" fill="#00b4f9"/><rect x="120" y="510" width="30" height="30" fill="#00b4f8"/><rect x="150" y="510" width="30" height="30" fill="#00b4f8"/><rect x="180" y="510" width="30" height="30" fill="#00b4f7"/><rect x="210" y="510" width="30" height="30" fill="#00b4f6"/><rect x="240" y="510" width="30" height="30" fill="#00b3f5"/><rect x="270" y="510" width="30" height="30" fill="#00b1f4"/><rect x="300" y="510" width="30" height="30" fill="#00aef2"/><rect x="330" y="510" width="30" height="30" fill="#01aaf0"/><rect x="360" y="510" width="30" height="30" fill="#02a5ee"/><rect x="390" y="510" width="30" height="30" fill="#049feb"/><rect x="420" y="510" width="30" height="30" fill="#0599e9"/><rect x="450" y="510" width="30" height="30" fill="#0692e6"/><rect x="480" y="510" width="30" height="30" fill="#078ce2"/><rect x="510" y="510" width="30" height="30" fill="#0785df"/><rect x="540" y="510" width="30" height="30" fill="#077edb"/><rect x="570" y="510" width="30" height="30" fill="#0678d7"/><rect x="600" y="510" width="30" height="30" fill="#0571d2"/><rect x="630" y="510" width="30" height="30" fill="#0469cd"/><rect x="660" y="510" width="30" height="30" fill="#0462c9"/><rect x="690" y="510" width="30" height="30" fill="#035cc5"/><rect x="720" y="510" width="30" height="30" fill="#0355c1"/><rect x="750" y="510" width="30" height="30" fill="#034fbe"/><rect x="780" y="510" width="30" height="30" fill="#034abc"/><rect x="810" y="510" width="30" height="30" fill="#0345ba"/><rect x="840" y="510" width="30" height="30" fill="#0342b9"/><rect x="870" y="510" width="30" height="30" fill="#0340b8"/><rect x="900" y="510" width="30" height="30" fill="#033fb7"/><rect x="930" y="510" width="30" height="30" fill="#033fb7"/><rect x="960" y="510" width="30" height="30" fill="#033fb7"/><rect x="-60" y="540" width="30" height="30" fill="#00b4fa"/><rect x="-30" y="540" width="30" height="30" fill="#00b4fa"/><rect x="0" y="540" width="30" height="30" fill="#00b4f9"/><rect x="30" y="540" width="30" height="30" fill="#00b4f9"/><rect x="60" y="540" width="30" height="30" fill="#00b4f9"/><rect x="90" y="540" width="30" height="30" fill="#00b4f9"/><rect x="120" y="540" width="30" height="30" fill="#00b4f8"/><rect x="150" y="540" width="30" height="30" fill="#00b4f8"/><rect x="180" y="540" width="30" height="30" fill="#00b4f7"/><rect x="210" y="540" width="30" height="30" fill="#00b4f6"/><rect x="240" y="540" width="30" height="30" fill="#00b3f5"/><rect x="270" y="540" width="30" height="30" fill="#00b1f4"/><rect x="300" y="540" width="30" height="30" fill="#00aef2"/><rect x="330" y="540" width="30" height="30" fill="#01aaf0"/><rect x="360" y="540" width="30" height="30" fill="#02a5ee"/><rect x="390" y="540" width="30" height="30" fill="#049feb"/><rect x="420" y="540" width="30" height="30" fill="#0599e9"/><rect x="450" y="540" width="30" height="30" fill="#0692e6"/><rect x="480" y="540" width="30" height="30" fill="#078ce2"/><rect x="510" y="540" width="30" height="30" fill="#0785df"/><rect x="540" y="540" width="30" height="30" fill="#077edb"/><rect x="570" y="540" width="30" height="30" fill="#0678d7"/><rect x="600" y="540" width="30" height="30" fill="#0571d2"/><rect x="630" y="540" width="30" height="30" fill="#0469cd"/><rect x="660" y="540" width="30" height="30" fill="#0462c9"/><rect x="690" y="540" width="30" height="30" fill="#035cc5"/><rect x="720" y="540" width="30" height="30" fill="#0355c1"/><rect x="750" y="540" width="30" height="30" fill="#034fbe"/><rect x="780" y="540" width="30" height="30" fill="#034abc"/><rect x="810" y="540" width="30" height="30" fill="#0345ba"/><rect x="840" y="540" width="30" height="30" fill="#0342b9"/><rect x="870" y="540" width="30" height="30" fill="#0340b8"/><rect x="900" y="540" width="30" height="30" fill="#033fb7"/><rect x="930" y="540" width="30" height="30" fill="#033fb7"/><rect x="960" y="540" width="30" height="30" fill="#033fb7"/><rect x="-60" y="570" width="30" height="30" fill="#00b4fa"/><rect x="-30" y="570" width="30" height="30" fill="#00b4fa"/><rect x="0" y="570" width="30" height="30" fill="#00b4f9"/><rect x="30" y="570" width="30" height="30" fill="#00b4f9"/><rect x="60" y="570" width="30" height="30" fill="#00b4f9"/><rect x="90" y="570" width="30" height="30" fill="#00b4f9"/><rect x="120" y="570" width="30" height="30" fill="#00b4f8"/><rect x="150" y="570" width="30" height="30" fill="#00b4f8"/><rect x="180" y="570" width="30" height="30" fill="#00b4f7"/><rect x="210" y="570" width="30" height="30" fill="#00b4f6"/><rect x="240" y="570" width="30" height="30" fill="#00b3f5"/><rect x="270" y="570" width="30" height="30" fill="#00b1f4"/><rect x="300" y="570" width="30" height="30" fill="#00aef2"/><rect x="330" y="570" width="30" height="30" fill="#01aaf0"/><rect x="360" y="570" width="30" height="30" fill="#02a5ee"/><rect x="390" y="570" width="30" height="30" fill="#049feb"/><rect x="420" y="570" width="30" height="30" fill="#0599e9"/><rect x="450" y="570" width="30" height="30" fill="#0692e6"/><rect x="480" y="570" width="30" height="30" fill="#078ce2"/><rect x="510" y="570" width="30" height="30" fill="#0785df"/><rect x="540" y="570" width="30" height="30" fill="#077edb"/><rect x="570" y="570" width="30" height="30" fill="#0678d7"/><rect x="600" y="570" width="30" height="30" fill="#0571d2"/><rect x="630" y="570" width="30" height="30" fill="#0469cd"/><rect x="660" y="570" width="30" height="30" fill="#0462c9"/><rect x="690" y="570" width="30" height="30" fill="#035cc5"/><rect x="720" y="570" width="30" height="30" fill="#0355c1"/><rect x="750" y="570" width="30" height="30" fill="#034fbe"/><rect x="780" y="570" width="30" height="30" fill="#034abc"/><rect x="810" y="570" width="30" height="30" fill="#0345ba"/><rect x="840" y="570" width="30" height="30" fill="#0342b9"/><rect x="870" y="570" width="30" height="30" fill="#0340b8"/><rect x="900" y="570" width="30" height="30" fill="#033fb7"/><rect x="930" y="570" width="30" height="30" fill="#033fb7"/><rect x="960" y="570" width="30" height="30" fill="#033fb7"/></svg>
 <svg class="a" style="left:0;top:0" width="900" height="488">
  <defs>
   <radialGradient id="glow" cx="726" cy="270" r="110" gradientUnits="userSpaceOnUse">
    <stop offset="0" stop-color="#0066ff" stop-opacity=".6"/>
    <stop offset=".5" stop-color="#0060f0" stop-opacity=".22"/>
    <stop offset="1" stop-color="#0050e0" stop-opacity="0"/>
   </radialGradient>
   <linearGradient id="beamT" gradientUnits="userSpaceOnUse" x1="420" y1="0" x2="722" y2="0">
    <stop offset="0" stop-color="#30b0ff" stop-opacity="0"/>
    <stop offset="1" stop-color="#30b0ff" stop-opacity=".2"/>
   </linearGradient>
   <linearGradient id="beamB" gradientUnits="userSpaceOnUse" x1="560" y1="0" x2="722" y2="0">
    <stop offset="0" stop-color="#30a8ff" stop-opacity=".25"/>
    <stop offset="1" stop-color="#30a8ff" stop-opacity=".3"/>
   </linearGradient>
   <linearGradient id="paneT" gradientUnits="userSpaceOnUse" x1="0" y1="199" x2="0" y2="280">
    <stop offset="0" stop-color="#2eb0ff"/>
    <stop offset="1" stop-color="#20a0fc"/>
   </linearGradient>
   <linearGradient id="paneB" gradientUnits="userSpaceOnUse" x1="0" y1="283" x2="0" y2="365">
    <stop offset="0" stop-color="#229ffc"/>
    <stop offset="1" stop-color="#1e98f8"/>
   </linearGradient>
   <linearGradient id="edge" gradientUnits="userSpaceOnUse" x1="300" y1="76.8" x2="293.1" y2="100.8">
    <stop offset="0" stop-color="#50c8ff" stop-opacity=".22"/>
    <stop offset="1" stop-color="#50c8ff" stop-opacity="0"/>
   </linearGradient>
   <filter id="gb" x="-50%" y="-20%" width="200%" height="140%"><feGaussianBlur stdDeviation="9"/></filter>
  </defs>
  <polygon points="0,-9.2 722,197.8 722,260 0,260" fill="url(#edge)"/>
  <rect x="600" y="160" width="250" height="250" fill="url(#glow)"/>
  <rect x="712" y="200" width="22" height="160" fill="#0a7cff" opacity=".55" filter="url(#gb)"/>
  <polygon points="420,111.2 722,197.8 722,260 420,260" fill="url(#beamT)"/>
  <polygon points="560,344 722,365 560,412" fill="url(#beamB)"/>
  <polygon points="560,220.1 722,199 722,280 560,280" fill="url(#paneT)"/>
  <rect x="560" y="280" width="162" height="3" fill="#0c70e0"/>
  <polygon points="560,283 722,283 722,364.7 560,341.3" fill="url(#paneB)"/>
  <polygon points="560,339.5 722,317.8 722,364.7 560,341.3" fill="#38b4ff" opacity=".3"/>
  <line x1="560" y1="339.5" x2="722" y2="317.8" stroke="#50c8ff" stroke-width=".7" opacity=".5"/>
  <line x1="722" y1="199" x2="722" y2="280" stroke="#50e0ff" stroke-width="2"/>
  <line x1="722" y1="283" x2="722" y2="364.7" stroke="#50e0ff" stroke-width="2"/>
  <line x1="560" y1="220.1" x2="722" y2="199" stroke="#40c8ff" stroke-width=".9" opacity=".8"/>
  <line x1="560" y1="341.3" x2="722" y2="364.7" stroke="#40c8ff" stroke-width=".9" opacity=".8"/>
 </svg>
 <!-- desktop icons -->
 <svg class="a" style="left:0;top:0" width="80" height="370">
  <defs>
   <clipPath id="c360"><circle cx="53.7" cy="14.4" r="10.6"/></clipPath>
   <linearGradient id="gsh" x1="0" y1="0" x2="1" y2="1"><stop offset="0" stop-color="#8ad838"/><stop offset="1" stop-color="#1e8a1e"/></linearGradient>
   <linearGradient id="g36" x1="0" y1="0" x2="1" y2="1"><stop offset="0" stop-color="#9ee040"/><stop offset="1" stop-color="#38a820"/></linearGradient>
  </defs>
  <!-- 1 Administrator folder -->
  <path d="M10.2,6 h11.5 l.7,1 v17.3 l-4,-1 h-8.2z" fill="#f9dc86"/>
  <path d="M10.2,6 l2.5,1.5 v16.8 l-2.5,-1.3z" fill="#eec15a"/>
  <path d="M16,24.6 q0,-6.5 5,-7 q5,.5 5,7z" fill="#4f8a58"/>
  <circle cx="20.7" cy="14.2" r="3" fill="#c89878"/>
  <path d="M17.6,14 q.2,-4.2 3.3,-4.1 q3.2,.1 3,4.3 q-.8,-2.2 -3.1,-2.3 q-2.4,.1 -3.2,2.1z" fill="#262626"/>
  <!-- 2 360 safe -->
  <g clip-path="url(#c360)">
   <rect x="42" y="3" width="24" height="23" fill="#f6d800"/>
   <path d="M42,3 h24 v9 q-2,-1.5 -4.5,-2.5 q-3,-1.5 -5.5,-2.5 q-3,-1 -6,-.3 q-3.5,.8 -8,3.5z" fill="#2aa03a"/>
   <path d="M42,26 h24 v-1.2 q-3,-.5 -6.5,-2.5 q-4,-2.2 -8.5,-3.2 q-4,-.8 -9,1z" fill="#2aa03a"/>
  </g>
  <path d="M52.3,10 h2.8 v3.2 h3.3 v2.8 h-3.3 v3.4 h-2.8 v-3.4 h-3.5 v-2.8 h3.5z" fill="#2a9a3a"/>
  <!-- 3 this pc -->
  <path d="M13.2,53.1 l14.5,3.9 v9.7 l-14.5,-3.7z" fill="#48c4ff" stroke="#d8f0fa" stroke-width=".7"/>
  <path d="M21.5,65.5 l2.5,.6 v1.8 l-2.5,-.4z" fill="#c0dce8"/>
  <path d="M8.3,68.6 l6,-1.4 l8.5,2.6 l-6,1.7z" fill="#f4f6f8"/>
  <path d="M17.5,67.3 l3,-.8 l4,1 l-3,.9z" fill="#e8ecf0"/>
  <!-- 4 360 antivirus shield -->
  <path d="M53.4,51 q4.4,2.8 8.7,2.9 v7.4 q0,6.8 -8.7,10.8 q-8.8,-4 -8.8,-10.8 v-7.4 q4.4,-.1 8.8,-2.9z" fill="#f6f8f4"/>
  <path d="M53.4,53 q3.7,2.2 7.1,2.4 v6 q0,5.6 -7.1,9 q-7.2,-3.4 -7.2,-9 v-6 q3.5,-.2 7.2,-2.4z" fill="url(#gsh)"/>
  <path d="M55.5,55.5 l-4.6,5.6 h2.8 l-2,5.4 l5.2,-6.3 h-2.8z" fill="#eaffd8"/>
  <!-- 5 network -->
  <circle cx="20.6" cy="106.6" r="6.1" fill="#60c8f8" stroke="#e8f4f8" stroke-width="1"/>
  <path d="M24,101.5 a6.1,6.1 0 0 1 .8,9" stroke="#2a3a4a" stroke-width="1" fill="none"/>
  <path d="M8.2,105 l13.3,1.2 v8.5 l-13.3,-1.6z" fill="#58b8f0" stroke="#c8e4f4" stroke-width=".7"/>
  <path d="M11,116.8 l6.5,.7 l-.4,1.3 l-6.8,-.7z" fill="#f0f4f4"/>
  <!-- 6 docx -->
  <path d="M46.1,99.6 h11 l4.1,4.1 v15.5 h-15.1z" fill="#fbfbfb"/>
  <path d="M57.1,99.6 v4.1 h4.1z" fill="#d8dce0"/>
  <rect x="45.5" y="102.3" width="8.3" height="8.3" fill="#3a6ae0"/>
  <path d="M46.8,104 l1.4,5 l1.4,-3.5 l1.4,3.5 l1.4,-5" stroke="#fff" stroke-width=".8" fill="none"/>
  <rect x="47.5" y="113" width="11.5" height=".5" fill="#d0d4d8"/>
  <rect x="47.5" y="115" width="11.5" height=".5" fill="#d0d4d8"/>
  <rect x="47.5" y="117" width="11.5" height=".5" fill="#d0d4d8"/>
  <!-- 7 recycle bin -->
  <path d="M9.3,149.2 L19.5,147.3 L26.5,148.8 L25.2,164.8 L18.5,166 L11,164.6z" fill="#dcecf4" opacity=".92"/>
  <path d="M19.5,150.5 L26.5,148.8 L25.2,164.8 L18.5,166z" fill="#c4dce8" opacity=".9"/>
  <path d="M9.3,149.2 L19.5,147.3 L26.5,148.8 L16.5,150.8z" fill="#9ed4e4"/>
  <path d="M12.3,158.5 a2.5,2.5 0 0 1 1.5,-3.8 M15.2,154.6 a2.5,2.5 0 0 1 1.6,3.3 M16,159.6 a2.5,2.5 0 0 1 -3.3,.2" stroke="#1a78e0" stroke-width="1.3" fill="none"/>
  <!-- 8 360 driver -->
  <rect x="43.4" y="146.1" width="20.5" height="20.8" fill="#3888f0"/>
  <path d="M50.2,149.1 h6.8 l4.2,6.2 l-4.2,6.2 h-6.8 l-4.4,-6.2z" fill="none" stroke="#fff" stroke-width="1.1"/>
  <path d="M46,158.8 l4.2,4.6 h6.8 l4.2,-4.6" fill="none" stroke="#fff" stroke-width="1"/>
  <ellipse cx="53.6" cy="155.3" rx="3" ry="1.7" fill="none" stroke="#fff" stroke-width="1"/>
  <circle cx="53.6" cy="155.3" r=".8" fill="#fff"/>
  <!-- 9 control panel -->
  <rect x="8.4" y="197.4" width="19" height="13" fill="#cfeaf8" stroke="#20609a" stroke-width=".8"/>
  <circle cx="14.4" cy="202.9" r="3" fill="#2a80d8"/>
  <path d="M14.4,202.9 v-3 a3,3 0 0 1 2.8,2z" fill="#f8b820"/>
  <rect x="19" y="200" width="6.5" height="1" fill="#5aa8e0"/>
  <rect x="19" y="202.3" width="6.5" height="1" fill="#5aa8e0"/>
  <rect x="19" y="204.6" width="6.5" height="1" fill="#5aa8e0"/>
  <rect x="10.5" y="207.8" width="5" height=".8" fill="#f0a020"/>
  <rect x="15.5" y="207.8" width="9" height=".8" fill="#60a8e0"/>
  <!-- 10 360 browser -->
  <circle cx="53.8" cy="204.2" r="9.6" fill="#f0fff0"/>
  <circle cx="53.8" cy="204.2" r="8.8" fill="url(#g36)"/>
  <ellipse cx="54" cy="201.8" rx="3.6" ry="1.9" fill="#fff"/>
  <path d="M48.2,204.8 h12 M48.6,205.5 a5.8,5 0 0 0 10.4,2.5" stroke="#fff" stroke-width="1.6" fill="none"/>
  <path d="M45.5,214 q0,-9 8,-15 q5,-4 9,-5.5" stroke="#50b828" stroke-width="1.3" fill="none"/>
  <!-- 11 2345 -->
  <circle cx="18.2" cy="251.6" r="10.4" fill="#fff"/>
  <circle cx="18.2" cy="251.6" r="9.1" fill="#2a82e8"/>
  <ellipse cx="18.6" cy="248.5" rx="4.4" ry="2.2" fill="#fff"/>
  <path d="M11.6,252.6 h14.2 M12.2,253.4 a6.5,5.2 0 0 0 11.8,2.6" stroke="#fff" stroke-width="1.9" fill="none"/>
  <!-- 12 broadband -->
  <path d="M50.5,240.5 L59.5,240.5 L59.5,251 L50.5,251z" fill="#f4f4ff"/>
  <path d="M51.5,241.5 L58.5,241.5 L58.5,250 L51.5,250z" fill="#4a5ae0"/>
  <path d="M43,241.3 L54.5,241.3 L54.5,252 L43,252z" fill="#f0f2ff"/>
  <path d="M44,242.3 L53.5,242.3 L53.5,251 L44,251z" fill="#1a1ab8"/>
  <path d="M48.5,242.3 L51.5,242.3 L48.5,251 L46,251z" fill="#d8dcff" opacity=".85"/>
  <path d="M45.5,253 L52,252.2 L54,254 L47.5,255z" fill="#f4efe6"/>
  <path d="M53.5,257.5 L60.5,255.5 L64.5,257 V259 L57.5,261 L53.5,259.5z" fill="#e4d4c4"/>
  <path d="M57,258.3 L60.5,257.3" stroke="#2a3038" stroke-width="1"/>
  <!-- 13 sogou -->
  <circle cx="17.9" cy="298.2" r="10.5" fill="#fff"/>
  <circle cx="17.9" cy="298.2" r="9.2" fill="#3878e0"/>
  <path d="M13.5,291 q-1.5,3.5 2,6 q4,3 4.5,6.5 q.3,2.2 -1,3.5 q4,-1.5 4,-5 q0,-3.5 -4.2,-5.8 q-3,-1.8 -1.8,-4.6 q.8,-1.6 2.6,-2.2 q-4.5,-.2 -6.1,1.6z" fill="#fff"/>
  <!-- 14 WPS -->
  <path d="M17.4,335.9 l9.2,5 v10.2 l-9.2,5 l-9.2,-5 v-10.2z" fill="#3a6ae8"/>
  <path d="M11.8,342.2 h3 l2.5,5 l2.5,-5 h3.6 l-3.2,8 h-2 l-1,-2.2 l-1,2.2 h-2z" fill="none" stroke="#fff" stroke-width="1"/>
 </svg>
<div class="s lb" style="left:0.00px;top:27.60px;width:360px;font-size:56.0px;line-height:72.0px;-webkit-text-stroke-width:1.2px">Administr...</div>
<div class="s lb" style="left:35.50px;top:27.60px;width:360px;font-size:56.0px;line-height:72.0px;-webkit-text-stroke-width:1.2px">360安全卫士</div>
<div class="s lb" style="left:0.00px;top:73.80px;width:360px;font-size:56.0px;line-height:72.0px;-webkit-text-stroke-width:1.2px">此电脑</div>
<div class="s lb" style="left:35.50px;top:73.80px;width:360px;font-size:56.0px;line-height:72.0px;-webkit-text-stroke-width:1.2px">360杀毒</div>
<div class="s lb" style="left:0.00px;top:122.00px;width:360px;font-size:56.0px;line-height:72.0px;-webkit-text-stroke-width:1.2px">网络</div>
<div class="s lb" style="left:35.00px;top:122.00px;width:370px;font-size:56.0px;line-height:72.0px;-webkit-text-stroke-width:1.2px">系统安装后必<br>看.docx</div>
<div class="s lb" style="left:0.00px;top:168.30px;width:360px;font-size:56.0px;line-height:72.0px;-webkit-text-stroke-width:1.2px">回收站</div>
<div class="s lb" style="left:35.50px;top:168.30px;width:360px;font-size:56.0px;line-height:72.0px;-webkit-text-stroke-width:1.2px">360驱动大师</div>
<div class="s lb" style="left:0.00px;top:216.70px;width:360px;font-size:56.0px;line-height:72.0px;-webkit-text-stroke-width:1.2px">控制面板</div>
<div class="s lb" style="left:35.00px;top:216.70px;width:370px;font-size:56.0px;line-height:72.0px;-webkit-text-stroke-width:1.2px">360安全浏览<br>器</div>
<div class="s lb" style="left:0.00px;top:263.50px;width:360px;font-size:56.0px;line-height:72.0px;-webkit-text-stroke-width:1.2px">2345加速浏<br>览器</div>
<div class="s lb" style="left:35.50px;top:262.50px;width:360px;font-size:56.0px;line-height:72.0px;-webkit-text-stroke-width:1.2px">宽带连接</div>
<div class="s lb" style="left:0.00px;top:312.00px;width:360px;font-size:56.0px;line-height:72.0px;-webkit-text-stroke-width:1.2px">搜狗高速浏览<br>器</div>
<div class="s lb" style="left:0.00px;top:358.30px;width:360px;font-size:56.0px;line-height:72.0px;-webkit-text-stroke-width:1.2px">WPS 2019</div>
<div class="a" style="left:0;top:0;width:900px;height:1px;background:rgba(255,255,255,.28)"></div><div class="a" style="left:0;top:1px;width:1px;height:487px;background:rgba(255,255,255,.35)"></div></div>
<div id="win"></div>
<svg class="a" style="left:153px;top:115px" width="480" height="297">
 <!-- title flag -->
 <path d="M6.2,4.2 L6.6,11.2" stroke="#3a4a78" stroke-width=".9"/>
 <path d="M5.4,4 C7.5,3.2 9.5,5.6 11.6,5.3 L11.2,7.4 C9.2,7.7 7.6,6.9 6,7.9z" fill="#2a40c8"/>
 <!-- min max close -->
 <rect x="424" y="7.3" width="5" height=".8" fill="#333"/>
 <rect x="445.3" y="5.3" width="4.8" height="4.6" fill="none" stroke="#333" stroke-width=".8"/>
 <path d="M466.6,5.3 l4.6,4.6 M471.2,5.3 l-4.6,4.6" stroke="#333" stroke-width=".8"/>
 <!-- nav arrows -->
 <path d="M6.5,24.4 h6 M6.5,24.4 l2.5,-2.5 M6.5,24.4 l2.5,2.5" stroke="#6a6a6a" stroke-width=".8" fill="none"/>
 <path d="M20.5,24.4 h6 M26.5,24.4 l-2.5,-2.5 M26.5,24.4 l-2.5,2.5" stroke="#c8c8c8" stroke-width=".8" fill="none"/>
 <path d="M33.3,23.8 l1.2,1.2 l1.2,-1.2" stroke="#777" stroke-width=".7" fill="none"/>
 <path d="M44,27.5 v-6 M44,21.5 l-2.5,2.5 M44,21.5 l2.5,2.5" stroke="#555" stroke-width=".8" fill="none"/>
 <!-- address bar -->
 <rect x="50.4" y="17.6" width="323.3" height="13.6" fill="#fff" stroke="#e8e8e8" stroke-width=".8"/>
 <line x1="358.5" y1="18" x2="358.5" y2="30.8" stroke="#e6e6e6" stroke-width=".8"/>
 <path d="M53.6,21.2 L53.9,27.5" stroke="#3a4a78" stroke-width=".9"/>
 <path d="M52.6,21 C54.6,20.3 56.6,22.5 58.8,22.2 L58.4,24.2 C56.4,24.5 54.8,23.7 53.2,24.6z" fill="#2a40c8"/>
 <path d="M63.6,23.4 l1.4,1.4 l-1.4,1.4" stroke="#777" stroke-width=".7" fill="none"/>
 <path d="M97,23.4 l1.4,1.4 l-1.4,1.4" stroke="#777" stroke-width=".7" fill="none"/>
 <path d="M148.5,23.4 l1.4,1.4 l-1.4,1.4" stroke="#777" stroke-width=".7" fill="none"/>
 <path d="M351,23.8 l1.4,1.4 l1.4,-1.4" stroke="#444" stroke-width=".8" fill="none"/>
 <path d="M368.6,22.6 a2.2,2.2 0 1 1 -2.6,0.4" stroke="#444" stroke-width=".8" fill="none"/>
 <path d="M365.6,21.8 l.6,1.4 l1.3,-.7" stroke="#444" stroke-width=".7" fill="none"/>
 <!-- search box -->
 <rect x="379.4" y="17.6" width="94.3" height="13.6" fill="#fff" stroke="#e8e8e8" stroke-width=".8"/>
 <circle cx="467.8" cy="23.6" r="1.9" fill="none" stroke="#444" stroke-width=".8"/>
 <path d="M466.4,25 l-2.3,2.3" stroke="#444" stroke-width=".9"/>
 <!-- help -->
 <circle cx="475.4" cy="39.3" r="4.1" fill="#1a66c8"/>
 <text x="475.4" y="41.6" font-size="6.2" font-weight="bold" fill="#fff" text-anchor="middle" font-family="Liberation Sans">?</text>
 <!-- separators -->
 <rect x="106" y="74" width="282" height=".9" fill="#e2e2e2"/>
 <rect x="106" y="91" width="282" height=".9" fill="#e2e2e2"/>
 <rect x="106" y="108" width="282" height=".9" fill="#e2e2e2"/>
 <!-- chevrons -->
 <circle cx="377.7" cy="83" r="4.4" fill="none" stroke="#9a9a9a" stroke-width=".7"/>
 <path d="M375.8,82 l1.9,1.9 l1.9,-1.9" fill="none" stroke="#8a8a8a" stroke-width=".7"/>
 <circle cx="377.7" cy="99.9" r="4.4" fill="none" stroke="#9a9a9a" stroke-width=".7"/>
 <path d="M375.8,98.9 l1.9,1.9 l1.9,-1.9" fill="none" stroke="#8a8a8a" stroke-width=".7"/>
 <!-- recovery icon -->
 <path d="M118.9,139.1 L132.8,143.3 V152.6 L118.9,147.2z" fill="#3aaaf0" stroke="#2a6aa8" stroke-width=".6"/>
 <path d="M116.5,148.5 L131.5,153 L126,157.5 L112.5,153.5z" fill="#e4e6ea" stroke="#c0c4c8" stroke-width=".4"/>
 <path d="M118.8,145.5 Q115,147 113.8,151" fill="none" stroke="#22b030" stroke-width="1.8"/>
 <path d="M110.8,149.2 L113.4,154.6 L117.2,151z" fill="#22b030"/>
</svg>
<div class="s" style="left:167.40px;top:120.70px;font-size:56.0px;color:#262626;font-weight:400;-webkit-text-stroke-width:1.3px;">安全和维护</div>
<div class="s" style="left:223.00px;top:136.90px;font-size:56.0px;color:#262626;font-weight:400;-webkit-text-stroke-width:1.3px;">控制面板</div>
<div class="s" style="left:257.00px;top:136.90px;font-size:56.0px;color:#262626;font-weight:400;-webkit-text-stroke-width:1.3px;">所有控制面板项</div>
<div class="s" style="left:307.90px;top:136.90px;font-size:56.0px;color:#262626;font-weight:400;-webkit-text-stroke-width:1.3px;">安全和维护</div>
<div class="s" style="left:536.90px;top:137.10px;font-size:56.0px;color:#7a7a7a;font-weight:400;-webkit-text-stroke-width:1.3px;-webkit-text-stroke-width:.6px">搜索控制面板</div>
<div class="s" style="left:167.40px;top:157.70px;font-size:56.0px;color:#3d4a8a;font-weight:400;-webkit-text-stroke-width:1.3px;">控制面板主页</div>
<div class="s" style="left:167.40px;top:174.70px;font-size:56.0px;color:#3d4a8a;font-weight:400;-webkit-text-stroke-width:1.3px;">更改安全和维护设置</div>
<div class="s" style="left:167.40px;top:185.80px;font-size:56.0px;color:#3d4a8a;font-weight:400;-webkit-text-stroke-width:1.3px;">更改用户帐户控制设置</div>
<div class="s" style="left:167.40px;top:198.10px;font-size:56.0px;color:#3d4a8a;font-weight:400;-webkit-text-stroke-width:1.3px;">查看存档的消息</div>
<div class="s" style="left:260.10px;top:160.38px;font-size:75.0px;color:#3358c4;font-weight:400;-webkit-text-stroke-width:1.3px;-webkit-text-stroke:2.2px #3358c4">查看最新消息并解决问题</div>
<div class="s" style="left:259.70px;top:172.50px;font-size:56.0px;color:#262626;font-weight:400;-webkit-text-stroke-width:1.3px;">安全和维护未检测到任何问题。</div>
<div class="s" style="left:265.20px;top:195.21px;font-size:74.4px;color:#3a72d8;font-weight:400;-webkit-text-stroke-width:1.3px;">安全(S)</div>
<div class="s" style="left:265.20px;top:211.21px;font-size:74.4px;color:#3a72d8;font-weight:400;-webkit-text-stroke-width:1.3px;">维护(M)</div>
<div class="s" style="left:259.70px;top:235.10px;font-size:54.3px;color:#262626;font-weight:400;-webkit-text-stroke-width:1.3px;">如果列表中不包括你的问题，请尝试下列方法之一：</div>
<div class="s" style="left:293.50px;top:255.90px;font-size:56.0px;color:#3a6ad0;font-weight:400;-webkit-text-stroke-width:1.3px;">恢复(R)</div>
<div class="s" style="left:293.50px;top:266.20px;font-size:56.0px;color:#262626;font-weight:400;-webkit-text-stroke-width:1.3px;">恢复电脑而不影响文件，或者初始</div>
<div class="s" style="left:293.50px;top:273.90px;font-size:56.0px;color:#262626;font-weight:400;-webkit-text-stroke-width:1.3px;">化电脑并重新开始。</div>
<div class="s" style="left:167.00px;top:372.80px;font-size:56.0px;color:#8a8a8a;font-weight:400;-webkit-text-stroke-width:1.3px;">另请参阅</div>
<div class="s" style="left:167.00px;top:384.80px;font-size:56.0px;color:#3d4a8a;font-weight:400;-webkit-text-stroke-width:1.3px;">文件历史记录</div>
<div class="s" style="left:167.00px;top:396.20px;font-size:56.0px;color:#3d4a8a;font-weight:400;-webkit-text-stroke-width:1.3px;"><span style="letter-spacing:3px">Windows</span> 程序兼容性疑难解答</div>
<div id="taskbar"></div>
<!-- active button -->
<div class="a" style="left:70px;top:488px;width:75px;height:18px;background:#4a5a62"></div>
<div class="a" style="left:70px;top:505px;width:75px;height:1px;background:#8cc4ec"></div>
<svg class="a" style="left:0;top:488px" width="160" height="18">
 <!-- win logo -->
 <rect x="7.7" y="4.7" width="3.7" height="3.5" fill="#fff"/>
 <rect x="12" y="4.7" width="3.7" height="3.5" fill="#fff"/>
 <rect x="7.7" y="8.8" width="3.7" height="3.5" fill="#fff"/>
 <rect x="12" y="8.8" width="3.7" height="3.5" fill="#fff"/>
 <!-- search -->
 <circle cx="35.3" cy="7" r="2.6" fill="none" stroke="#e8e8e8" stroke-width=".9"/>
 <path d="M33.5,8.8 l-3.5,3.5" stroke="#e8e8e8" stroke-width=".9"/>
 <!-- explorer -->
 <path d="M53,4.5 h4 l1,1 h6 v8 h-11z" fill="#f2c14e"/>
 <rect x="53" y="7" width="11" height="6.5" fill="#ffd865"/>
 <rect x="55.5" y="10" width="6" height="3" fill="#2a7ad8"/>
 <!-- active app flag -->
 <path d="M74.6,4 L78.6,14.5" stroke="#b8c0cc" stroke-width=".9"/>
 <path d="M75,3.8 C78,3 80.5,6.8 85,7.2 L84.5,9.8 C81,10.2 79,9 77,10.6z" fill="#2a3ed8"/>
</svg>
<!-- IME toolbar -->
<div class="a" style="left:797px;top:473.7px;width:103px;height:12.3px;background:#fff"></div>
<svg class="a" style="left:780px;top:466px" width="120" height="40">
 <circle cx="12.7" cy="13.3" r="5.9" fill="#2a78f0" stroke="#8ec0ff" stroke-width=".6"/>
 <path d="M8.5,17.5 l-1.3,3 l3.8,-1.8z" fill="#2a78f0"/>
 <path d="M9.8,10.8 h5.8 M10.3,13.3 h4.8 M9.8,15.8 h5.8 M12.7,10.8 v5" stroke="#fff" stroke-width="1"/>
 <g stroke="#2a6ad8" stroke-width="1.2" fill="none">
  <rect x="24.7" y="11.6" width="4.2" height="3.4"/><path d="M26.8,9.5 v8"/>
  <circle cx="47.7" cy="13.3" r="3"/>
  <path d="M55.8,16.8 l4.5,-5 M55.8,17.2 h5"/>
  <path d="M67,11 l4.8,5 M71.8,11 l-4.8,5"/>
  <rect x="77.2" y="11.2" width="5.8" height="4.4"/>
 </g>
 <circle cx="46.5" cy="12.5" r=".5" fill="#2a6ad8"/><circle cx="48.9" cy="12.5" r=".5" fill="#2a6ad8"/>
 <circle cx="35.3" cy="12" r="1.1" fill="#2a6ad8"/><circle cx="38.7" cy="15.5" r="1.2" fill="#2a6ad8"/>
 <circle cx="90.7" cy="11.8" r="1.4" fill="#c8d4e8"/><path d="M88,17 q2.7,-4 5.4,0z" fill="#c8d4e8"/>
 <path d="M98.5,11.5 l3,-1 l3,1 l1,2 l-1.5,.5 v3.5 h-5 v-3.5 l-1.5,-.5z" fill="#2a6ad8"/>
 <circle cx="105.5" cy="10" r="1.3" fill="#f03030"/>
 <circle cx="112.7" cy="13.3" r="2.8" fill="none" stroke="#2a6ad8" stroke-width="1.8" stroke-dasharray="1.2 1"/>
 <circle cx="112.7" cy="13.3" r="1" fill="#2a6ad8"/>
</svg>
<!-- tray -->
<svg class="a" style="left:760px;top:488px" width="140" height="18">
 <circle cx="14.7" cy="9" r="3.2" fill="#e8d000"/><circle cx="14.7" cy="9" r="1.3" fill="#2a9a30"/>
 <path d="M23,6.5 q3,-2 6,0 v4 q-3,3 -6,0z" fill="#f4f4f4"/><circle cx="28" cy="11" r="2" fill="#e02a2a"/>
 <rect x="36" y="6" width="2.8" height="6.5" fill="none" stroke="#c8c8c8" stroke-width=".7"/>
 <path d="M45.5,5.5 q2.5,1 5,0 v4 q0,3 -2.5,4 q-2.5,-1 -2.5,-4z" fill="#6ab030"/>
 <rect x="56.5" y="6" width="6" height="4.3" fill="none" stroke="#d8d8d8" stroke-width=".7"/>
 <path d="M68,7.5 h1.5 l2,-2 v7 l-2,-2 h-1.5z" fill="#d8d8d8"/>
 <path d="M73,6.5 q1.5,2.5 0,5 M74.5,5.5 q2.2,3.5 0,7" stroke="#d8d8d8" stroke-width=".6" fill="none"/>
 <rect x="79.5" y="7" width="3.8" height="2.8" fill="none" stroke="#e8e8e8" stroke-width=".8"/><path d="M81.4,5.5 v7" stroke="#e8e8e8" stroke-width=".8"/>
 <rect x="92" y="5.3" width="6.6" height="7" rx=".6" fill="#2a8ae8"/><path d="M93.5,7.5 h3.5 M94,9.5 h3.5" stroke="#fff" stroke-width=".6"/>
 <rect x="136.5" y="0" width="1.5" height="18" fill="#3a4656"/>
</svg>
<div class="s" style="left:88.00px;top:494.00px;font-size:56.0px;color:#f0f0f0;font-weight:400;-webkit-text-stroke-width:1.3px;">安全和维护</div>
<div class="s" style="left:873.60px;top:489.86px;font-size:60.0px;color:#fff;font-weight:400;-webkit-text-stroke-width:0px;-webkit-text-stroke-width:.8px">20:12</div>
<div class="s" style="left:867.10px;top:498.64px;font-size:62.0px;color:#fff;font-weight:400;-webkit-text-stroke-width:0px;-webkit-text-stroke-width:.8px">2021/4/12</div>
</body></html>
